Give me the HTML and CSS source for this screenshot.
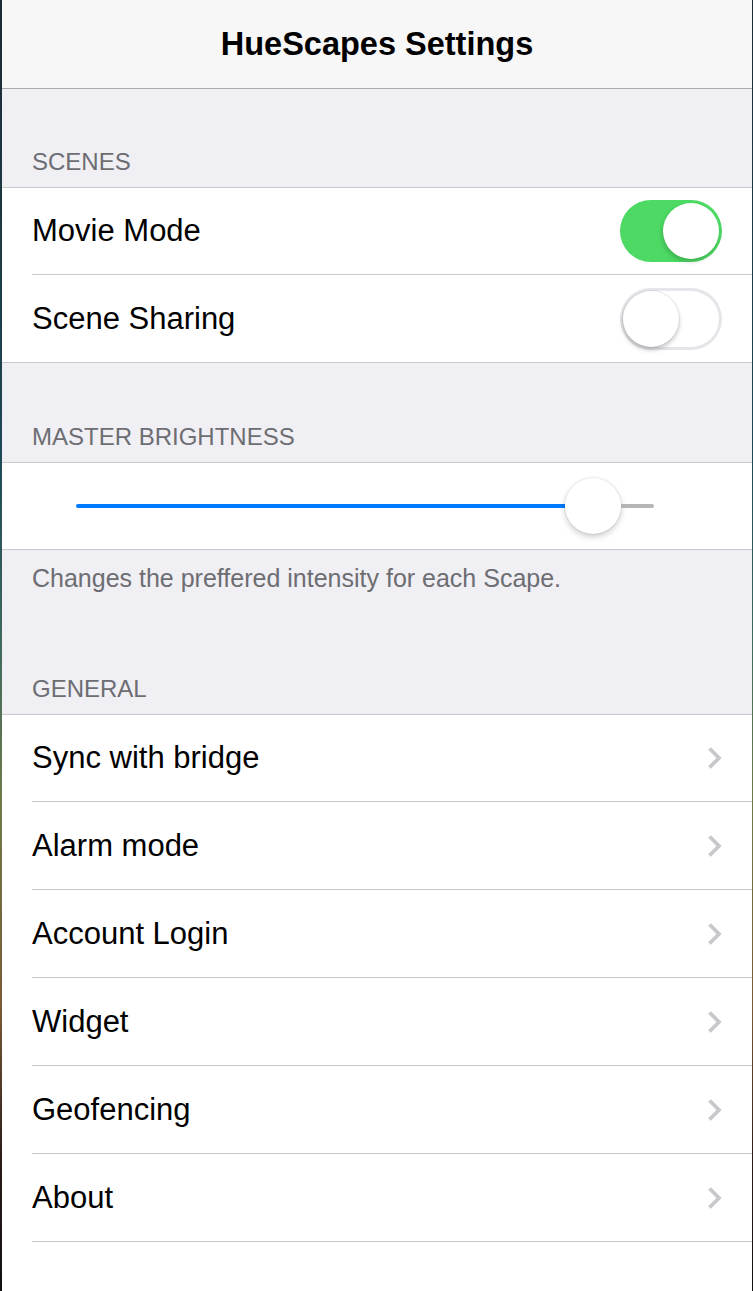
FILE: index.html
```html
<!DOCTYPE html>
<html lang="en">
<head>
<meta charset="utf-8">
<title>HueScapes Settings</title>
<link rel="stylesheet" href="styles.css">
</head>
<body>
<div class="frame">
  <div class="app">
    <header class="navbar"><h1 class="title">HueScapes Settings</h1></header>

    <section class="group">
      <div class="group-header">SCENES</div>
      <ul class="list list-closed">
        <li class="row"><span class="label">Movie Mode</span><span class="switch on"><span class="knob"></span></span></li>
        <li class="row"><span class="label">Scene Sharing</span><span class="switch"><span class="knob"></span></span></li>
      </ul>
    </section>

    <section class="group">
      <div class="group-header group-header-tall">MASTER BRIGHTNESS</div>
      <div class="slider-row">
        <div class="slider">
          <span class="track-fill"></span>
          <span class="thumb"></span>
          <span class="track-rest"></span>
        </div>
      </div>
      <div class="group-footer">Changes the preffered intensity for each Scape.</div>
    </section>

    <section class="group">
      <div class="group-header">GENERAL</div>
      <ul class="list list-open">
        <li class="row"><span class="label">Sync with bridge</span><svg class="chevron" viewBox="0 0 15 24" width="15" height="24"><polyline points="2.5,2.5 12,12 2.5,21.5"/></svg></li>
        <li class="row"><span class="label">Alarm mode</span><svg class="chevron" viewBox="0 0 15 24" width="15" height="24"><polyline points="2.5,2.5 12,12 2.5,21.5"/></svg></li>
        <li class="row"><span class="label">Account Login</span><svg class="chevron" viewBox="0 0 15 24" width="15" height="24"><polyline points="2.5,2.5 12,12 2.5,21.5"/></svg></li>
        <li class="row"><span class="label">Widget</span><svg class="chevron" viewBox="0 0 15 24" width="15" height="24"><polyline points="2.5,2.5 12,12 2.5,21.5"/></svg></li>
        <li class="row"><span class="label">Geofencing</span><svg class="chevron" viewBox="0 0 15 24" width="15" height="24"><polyline points="2.5,2.5 12,12 2.5,21.5"/></svg></li>
        <li class="row"><span class="label">About</span><svg class="chevron" viewBox="0 0 15 24" width="15" height="24"><polyline points="2.5,2.5 12,12 2.5,21.5"/></svg></li>
      </ul>
    </section>
  </div>
</div>
</body>
</html>
```

FILE: styles.css
```css
* { box-sizing: border-box; }

html, body {
  margin: 0;
  padding: 0;
}

body {
  font-family: "Liberation Sans", Arial, Helvetica, sans-serif;
  background: #fff;
}

.frame {
  display: flex;
  min-height: 1291px;
  padding: 0 1px 0 2px;
  background: linear-gradient(to bottom, #1b2a33 0%, #1e4756 35%, #3f6a5e 50%, #6e7a4a 62%, #7a5a36 78%, #2a1a18 90%, #111 100%);
}

.app {
  flex: 1;
  background: #fff;
  display: flex;
  flex-direction: column;
}

.navbar {
  height: 89px;
  background: #f7f7f7;
  border-bottom: 1px solid #a9a9ad;
  display: flex;
  align-items: center;
  justify-content: center;
}

.title {
  margin: 0;
  font-size: 32.5px;
  font-weight: bold;
  color: #000;
  line-height: 1;
}

.group-header {
  height: 98px;
  background: #efeff4;
  display: flex;
  align-items: flex-end;
  padding: 0 0 13px 30px;
  font-size: 24px;
  line-height: 24px;
  color: #6d6d72;
}

.group-header-tall {
  height: 99px;
}

.list {
  list-style: none;
  margin: 0;
  padding: 0;
  border-top: 1px solid #c8c7cc;
  background: #fff;
}

.list-closed {
  border-bottom: 1px solid #c8c7cc;
}

.row {
  height: 88px;
  margin-left: 30px;
  padding-right: 30px;
  display: flex;
  align-items: center;
  justify-content: space-between;
  border-bottom: 1px solid #c8c7cc;
}

.row:first-child {
  height: 87px;
}

.list-closed .row:last-child {
  border-bottom: none;
  height: 87px;
}

.label {
  font-size: 31px;
  color: #000;
}

.switch {
  width: 102px;
  height: 62px;
  border-radius: 31px;
  padding: 3px;
  display: flex;
  justify-content: flex-start;
  align-items: center;
  background: #fff;
  box-shadow: inset 0 0 0 3px #e5e5ea;
}

.switch.on {
  justify-content: flex-end;
  background: #4cd964;
  box-shadow: none;
}

.knob {
  width: 56px;
  height: 56px;
  border-radius: 50%;
  background: #fff;
  box-shadow: 0 3px 5px rgba(0, 0, 0, 0.22), 0 0 0 1px rgba(0, 0, 0, 0.06);
}

.switch.on .knob {
  box-shadow: -1px 3px 4px rgba(0, 0, 0, 0.18);
}

.chevron {
  fill: none;
  stroke: #c7c7cc;
  stroke-width: 3.8;
  stroke-linecap: butt;
  stroke-linejoin: miter;
}

.slider-row {
  height: 88px;
  background: #fff;
  border-top: 1px solid #c8c7cc;
  border-bottom: 1px solid #c8c7cc;
  display: flex;
  align-items: center;
  padding-left: 74px;
}

.slider {
  display: flex;
  align-items: center;
}

.track-fill {
  width: 489px;
  height: 4px;
  background: #007aff;
  border-radius: 2px 0 0 2px;
}

.thumb {
  width: 56px;
  height: 56px;
  border-radius: 50%;
  background: #fff;
  box-shadow: 0 3px 6px rgba(0, 0, 0, 0.2), 0 0 0 1px rgba(0, 0, 0, 0.05);
}

.track-rest {
  width: 33px;
  height: 4px;
  background: #b6b6b6;
  border-radius: 0 2px 2px 0;
}

.group-footer {
  height: 66px;
  background: #efeff4;
  padding: 16px 0 0 30px;
  font-size: 25px;
  line-height: 25px;
  color: #6d6d72;
}
```
